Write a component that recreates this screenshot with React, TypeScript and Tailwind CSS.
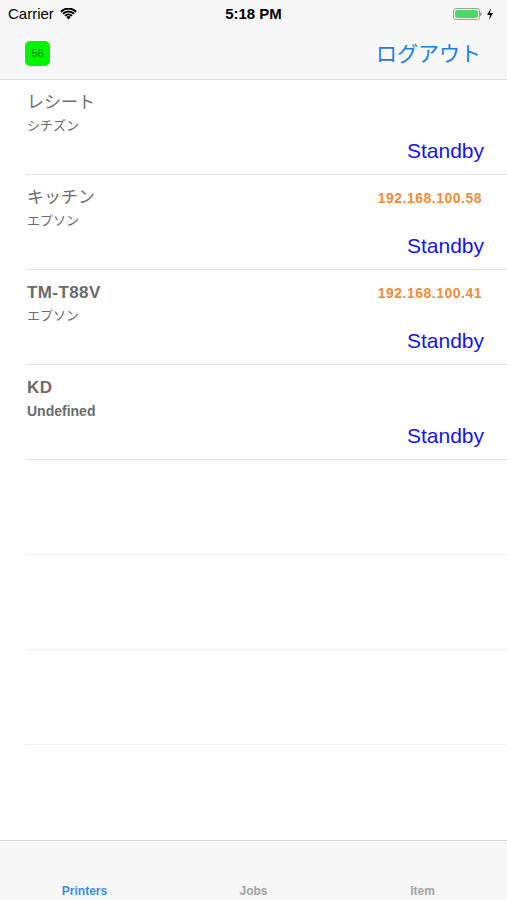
import React from "react";

type Printer = {
  name: string;
  maker: string;
  ip?: string;
  latin?: boolean;
};

const printers: Printer[] = [
  { name: "レシート", maker: "シチズン" },
  { name: "キッチン", maker: "エプソン", ip: "192.168.100.58" },
  { name: "TM-T88V", maker: "エプソン", ip: "192.168.100.41", latin: true },
  { name: "KD", maker: "Undefined", latin: true },
];

const font = { fontFamily: '"Liberation Sans", "Noto Sans CJK JP", sans-serif' };

const Wifi = () => (
  <svg width="17" height="12" viewBox="0 0 17 12" className="ml-[6px]">
    <path d="M8.5 11.5 L6.2 9.1 A3.3 3.3 0 0 1 10.8 9.1 Z" fill="#000" />
    <path d="M4.3 7.2 A6 6 0 0 1 12.7 7.2 L11.3 8.6 A4 4 0 0 0 5.7 8.6 Z" fill="#000" />
    <path d="M2.2 5.1 A9 9 0 0 1 14.8 5.1 L13.4 6.5 A7 7 0 0 0 3.6 6.5 Z" fill="#000" />
    <path d="M0.2 3 A11.8 11.8 0 0 1 16.8 3 L15.5 4.4 A10 10 0 0 0 1.5 4.4 Z" fill="#000" />
  </svg>
);

const Battery = () => (
  <div className="flex items-center">
    <div className="w-[27px] h-[12px] rounded-[3px] border border-[#a0a0a0] p-[1px]">
      <div className="w-full h-full rounded-[2px] bg-[#4cd964]" />
    </div>
    <div className="w-[2px] h-[4px] bg-[#a0a0a0] rounded-r-sm" />
    <svg width="8" height="12" viewBox="0 0 8 12" className="ml-[4px]">
      <path d="M5 0 L1 7 H4 L3 12 L7 5 H4 Z" fill="#000" />
    </svg>
  </div>
);

const Row = ({ p }: { p: Printer }) => (
  <div className="ml-[26px] h-[95px] border-b border-[#e3e3e3] pr-[25px] pl-[1px] flex flex-col">
    <div className="flex items-center justify-between h-[20px] mt-[13px]">
      <span className={`text-[#6b6b6b] ${p.latin ? "font-bold text-[17px] tracking-[0.4px]" : "font-normal text-[17px]"}`}>
        {p.name}
      </span>
      {p.ip && (
        <span className="text-[14px] font-bold text-[#f28c38] tracking-[0.5px]">{p.ip}</span>
      )}
    </div>
    <div
      className={`mt-[4px] text-[13px] text-[#6b6b6b] leading-[18px] ${
        p.maker === "Undefined" ? "font-bold text-[14px]" : ""
      }`}
    >
      {p.maker}
    </div>
    <div className="mt-[4px] flex justify-end -mr-[2px]">
      <span className="text-[21px] leading-[24px] text-[#1515e6]">Standby</span>
    </div>
  </div>
);

export default function App() {
  return (
    <div className="w-[507px] h-[900px] bg-white flex flex-col overflow-hidden" style={font}>
      <div className="bg-[#f7f7f7] border-b border-[#dcdcdc]">
        <div className="h-[28px] flex items-center justify-between px-[8px] relative">
          <div className="flex items-center text-[15px] text-black">
            Carrier
            <Wifi />
          </div>
          <div className="absolute left-0 right-0 text-center text-[15px] font-bold text-black pointer-events-none">
            5:18 PM
          </div>
          <div className="pr-[5px]">
            <Battery />
          </div>
        </div>
        <div className="h-[51px] flex items-center justify-between pl-[25px] pr-[26px]">
          <div className="w-[25px] h-[25px] rounded-[5px] bg-[#00f500] flex items-center justify-center text-[11px] text-[#0b8a0b]">
            56
          </div>
          <span className="text-[21px] text-[#1b7de6]">ログアウト</span>
        </div>
      </div>
      <div className="flex-1 flex flex-col">
        {printers.map((p) => (
          <Row key={p.name} p={p} />
        ))}
        <div className="ml-[26px] h-[95px] border-b border-[#f0f0f0]" />
        <div className="ml-[26px] h-[95px] border-b border-[#f0f0f0]" />
        <div className="ml-[26px] h-[95px] border-b border-[#f0f0f0]" />
      </div>
      <div className="h-[60px] bg-[#f7f7f7] border-t border-[#d8d8d8] grid grid-cols-3 items-end">
        <span className="text-center text-[12px] font-bold text-[#3a8ee6]">Printers</span>
        <span className="text-center text-[12px] font-bold text-[#a3a3a3]">Jobs</span>
        <span className="text-center text-[12px] font-bold text-[#a3a3a3]">Item</span>
      </div>
    </div>
  );
}
